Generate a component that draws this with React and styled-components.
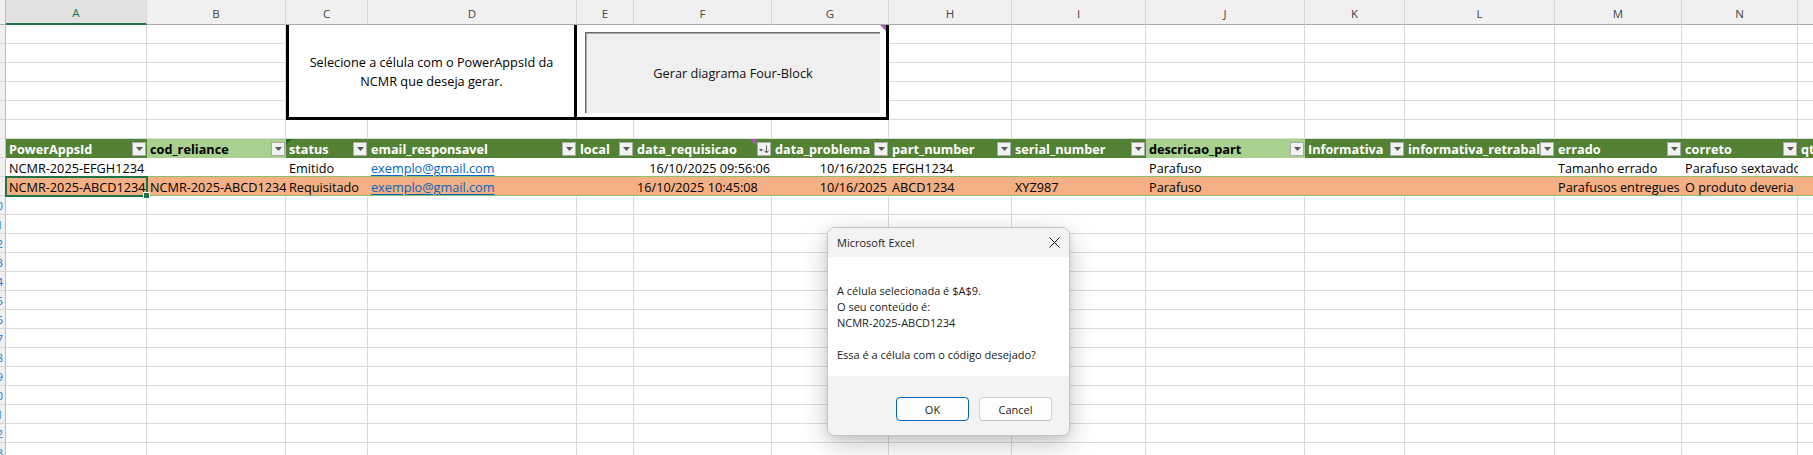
import React from 'react';
import styled, { createGlobalStyle } from 'styled-components';

const COL_WIDTHS = [141, 139, 82, 209, 57, 138, 117, 123, 134, 159, 100, 150, 127, 116, 100];
const LETTERS = ['A', 'B', 'C', 'D', 'E', 'F', 'G', 'H', 'I', 'J', 'K', 'L', 'M', 'N', 'O'];
const ROW_COUNT = 23;
const FONT = `"Open Sans", "Liberation Sans", sans-serif`;

const GlobalStyle = createGlobalStyle`
  html, body { margin: 0; padding: 0; background: #fff; overflow: hidden; }
  body { font-family: ${FONT}; }
`;

const Sheet = styled.div`
  position: relative;
  width: 1813px;
  height: 455px;
  overflow: hidden;
  background: #fff;
`;

const Grid = styled.div`
  display: grid;
  grid-template-columns: 6px ${COL_WIDTHS.map((w) => `${w}px`).join(' ')};
  grid-template-rows: 25px repeat(${ROW_COUNT}, 19px);
`;

const Corner = styled.div`
  grid-row: 1;
  grid-column: 1;
  box-sizing: border-box;
  background: #f0f0f0;
  border-right: 1px solid #bdbdbd;
  border-bottom: 1px solid #ababab;
`;

const ColHead = styled.div`
  grid-row: 1;
  grid-column: ${(p) => p.$col};
  box-sizing: border-box;
  background: ${(p) => (p.$selected ? '#e1e1e1' : '#f0f0f0')};
  border-right: 1px solid #d6d6d6;
  border-bottom: ${(p) => (p.$selected ? '2px solid #217346' : '1px solid #ababab')};
  color: ${(p) => (p.$selected ? '#217346' : '#444')};
  font-family: ${FONT};
  font-size: 11.5px;
  display: flex;
  align-items: center;
  justify-content: center;
  padding-top: 2px;
`;

const RowHead = styled.div`
  grid-row: ${(p) => p.$row};
  grid-column: 1;
  box-sizing: border-box;
  background: #f0f0f0;
  border-right: 1px solid #bdbdbd;
  border-bottom: 1px solid #d6d6d6;
  overflow: hidden;
  white-space: nowrap;
  display: flex;
  justify-content: flex-end;
  padding-right: 2px;
  font-size: 11.5px;
  line-height: 19px;
  color: #2f75d0;
`;

const Cell = styled.div`
  grid-row: ${(p) => p.$row};
  grid-column: ${(p) => p.$col};
  box-sizing: border-box;
  background: #fff;
  border-right: 1px solid #dadada;
  border-bottom: 1px solid #dadada;
  min-width: 0;
`;

const MergedNote = styled.div`
  grid-row: 2 / span 5;
  grid-column: 4 / span 2;
  box-sizing: border-box;
  background: #fff;
  border-left: 3px solid #000;
  border-right: 3px solid #000;
  border-bottom: 3px solid #000;
  display: flex;
  align-items: center;
  justify-content: center;
  text-align: center;
  font-family: ${FONT};
  font-size: 12.7px;
  line-height: 19px;
  color: #000;
  padding-top: 2px;
`;

const MergedAction = styled.div`
  grid-row: 2 / span 5;
  grid-column: 6 / span 3;
  position: relative;
  box-sizing: border-box;
  background: #fff;
  border-right: 3px solid #000;
  border-bottom: 3px solid #000;
  padding: 7px 6px 4px 8px;
  display: flex;

  &::after {
    content: '';
    position: absolute;
    top: 0;
    right: 0;
    width: 0;
    height: 0;
    border-top: 6px solid #b54fc6;
    border-left: 6px solid transparent;
  }
`;

const FormButton = styled.div`
  flex: 1;
  background: #efefef;
  border-top: 1px solid #6b6b6b;
  border-left: 1px solid #6b6b6b;
  box-shadow: inset 1px 1px 0 #a8a8a8;
  display: flex;
  align-items: center;
  justify-content: center;
  font-family: ${FONT};
  font-size: 12.7px;
  color: #111;
`;

const HeadCell = styled.div`
  grid-row: 8;
  grid-column: ${(p) => p.$col};
  position: relative;
  box-sizing: border-box;
  min-width: 0;
  background: ${(p) => (p.$light ? '#a9d08e' : '#548235')};
  color: ${(p) => (p.$light ? '#000' : '#fff')};
  font-family: ${FONT};
  font-weight: 700;
  font-size: 12.7px;
  line-height: 20px;
  padding: 0 3px;
  white-space: nowrap;
  overflow: hidden;
`;

const FilterBtn = styled.span`
  position: absolute;
  right: 1px;
  top: 3px;
  width: 14px;
  height: 14px;
  box-sizing: border-box;
  background: #f2f2f2;
  border: 1px solid #a9a9a9;
  display: flex;
  align-items: center;
  justify-content: center;
`;

const ErrorMark = styled.span`
  position: absolute;
  top: 0;
  left: 0;
  width: 0;
  height: 0;
  border-top: 6px solid #1c6b23;
  border-right: 6px solid transparent;
`;

const NoteMark = styled.span`
  position: absolute;
  top: 0;
  right: 16px;
  width: 0;
  height: 0;
  border-top: 6px solid #b54fc6;
  border-left: 6px solid transparent;
`;

const DataCell = styled.div`
  grid-row: ${(p) => p.$row};
  grid-column: ${(p) => p.$col};
  box-sizing: border-box;
  min-width: 0;
  background: ${(p) => p.$bg};
  border-bottom: 1px solid #8cc06a;
  font-family: ${FONT};
  font-size: 12.7px;
  line-height: 20px;
  color: #000;
  padding: ${(p) => (p.$pr ? `0 ${p.$pr}px 0 3px` : '0 3px')};
  white-space: nowrap;
  overflow: hidden;
  text-align: ${(p) => p.$align || 'left'};
`;

const Link = styled.span`
  color: #0563c1;
  text-decoration: underline;
  text-underline-offset: 2px;
`;

const Selection = styled.div`
  grid-row: 10;
  grid-column: 2;
  position: relative;
  margin: -1px;
  border: 2px solid #217346;
  pointer-events: none;
`;

const FillHandle = styled.span`
  position: absolute;
  right: -4px;
  bottom: -4px;
  width: 5px;
  height: 5px;
  background: #217346;
  border: 1px solid #fff;
`;

const Dialog = styled.div`
  position: absolute;
  left: 827px;
  top: 227px;
  width: 243px;
  height: 209px;
  box-sizing: border-box;
  border: 1px solid #c4c4c4;
  border-radius: 8px;
  background: #fff;
  box-shadow: 0 8px 26px rgba(0, 0, 0, 0.22), 0 2px 6px rgba(0, 0, 0, 0.08);
  display: flex;
  flex-direction: column;
  overflow: hidden;
  font-family: ${FONT};
  font-size: 11px;
  color: #1b1b1b;
`;

const TitleBar = styled.div`
  height: 29px;
  background: #f3f3f3;
  display: flex;
  align-items: center;
  justify-content: space-between;
  padding: 0 9px;
  font-size: 11px;
`;

const CloseIcon = styled.svg`
  width: 11px;
  height: 11px;
`;

const DialogBody = styled.div`
  flex: 1;
  background: #fff;
  padding: 26px 9px 0 9px;
  line-height: 16px;
`;

const BodyLine = styled.div`
  min-height: 16px;
  white-space: nowrap;
`;

const DialogFooter = styled.div`
  height: 59px;
  box-sizing: border-box;
  background: #f3f3f3;
  display: flex;
  justify-content: flex-end;
  align-items: flex-start;
  gap: 10px;
  padding: 21px 17px 0 0;
`;

const DlgButton = styled.div`
  width: 73px;
  height: 24px;
  box-sizing: border-box;
  border-radius: 4px;
  background: #fdfdfd;
  border: 1px solid ${(p) => (p.$primary ? '#0067c0' : '#d1d1d1')};
  border-bottom-color: ${(p) => (p.$primary ? '#0067c0' : '#bcbcbc')};
  display: flex;
  align-items: center;
  justify-content: center;
  font-size: 11px;
  color: #1b1b1b;
`;

const HEADERS = [
  { t: 'PowerAppsId' },
  { t: 'cod_reliance', light: true },
  { t: 'status', err: true },
  { t: 'email_responsavel' },
  { t: 'local' },
  { t: 'data_requisicao', sort: true, note: true },
  { t: 'data_problema' },
  { t: 'part_number' },
  { t: 'serial_number' },
  { t: 'descricao_part', light: true },
  { t: 'Informativa' },
  { t: 'informativa_retraball' },
  { t: 'errado' },
  { t: 'correto' },
  { t: 'qt', nofilter: true },
];

const ROWS = [
  {
    bg: '#ffffff',
    cells: [
      'NCMR-2025-EFGH1234',
      '',
      'Emitido',
      { link: 'exemplo@gmail.com' },
      '',
      { t: '16/10/2025 09:56:06', align: 'right', pr: 2 },
      { t: '10/16/2025', align: 'right', pr: 2 },
      'EFGH1234',
      '',
      'Parafuso',
      '',
      '',
      'Tamanho errado',
      'Parafuso sextavado',
      '',
    ],
  },
  {
    bg: '#f4b084',
    cells: [
      'NCMR-2025-ABCD1234',
      'NCMR-2025-ABCD1234',
      'Requisitado',
      { link: 'exemplo@gmail.com' },
      '',
      '16/10/2025 10:45:08',
      { t: '10/16/2025', align: 'right', pr: 2 },
      'ABCD1234',
      'XYZ987',
      'Parafuso',
      '',
      '',
      'Parafusos entregues',
      'O produto deveria',
      '',
    ],
  },
];

const DropArrow = () => (
  <svg width="7" height="4" viewBox="0 0 7 4">
    <path d="M0 0 H7 L3.5 4 Z" fill="#5a5a5a" />
  </svg>
);

const SortArrow = () => (
  <svg width="10" height="9" viewBox="0 0 10 9">
    <path d="M0 4 H4 L2 6.5 Z" fill="#5a5a5a" />
    <path d="M7.5 0.5 V7.5" stroke="#5a5a5a" strokeWidth="1" />
    <path d="M5.5 5.5 L7.5 8 L9.5 5.5" stroke="#5a5a5a" strokeWidth="1" fill="none" />
  </svg>
);

function isMerged(r, c) {
  if (r >= 1 && r <= 5 && (c === 2 || c === 3)) return true;
  if (r >= 1 && r <= 5 && c >= 4 && c <= 6) return true;
  return false;
}

export default function App() {
  const rowNums = [];
  for (let r = 1; r <= ROW_COUNT; r++) {
    rowNums.push(
      <RowHead key={`rh${r}`} $row={r + 1}>
        <span>{r >= 10 ? r : ''}</span>
      </RowHead>
    );
  }

  const emptyCells = [];
  for (let r = 1; r <= ROW_COUNT; r++) {
    if (r >= 7 && r <= 9) continue;
    for (let c = 0; c < COL_WIDTHS.length; c++) {
      if (isMerged(r, c)) continue;
      emptyCells.push(<Cell key={`c${r}-${c}`} $row={r + 1} $col={c + 2} />);
    }
  }

  return (
    <Sheet>
      <GlobalStyle />
      <Grid>
        <Corner />
        {LETTERS.map((l, i) => (
          <ColHead key={l} $col={i + 2} $selected={i === 0}>
            {l}
          </ColHead>
        ))}
        {rowNums}
        {emptyCells}
        <MergedNote>
          Selecione a célula com o PowerAppsId da
          <br />
          NCMR que deseja gerar.
        </MergedNote>
        <MergedAction>
          <FormButton>Gerar diagrama Four-Block</FormButton>
        </MergedAction>
        {HEADERS.map((h, i) => (
          <HeadCell key={`h${i}`} $col={i + 2} $light={h.light}>
            {h.t}
            {h.err && <ErrorMark />}
            {h.note && <NoteMark />}
            {!h.nofilter && <FilterBtn>{h.sort ? <SortArrow /> : <DropArrow />}</FilterBtn>}
          </HeadCell>
        ))}
        {ROWS.map((row, ri) =>
          row.cells.map((cell, ci) => {
            const obj = typeof cell === 'string' ? { t: cell } : cell;
            return (
              <DataCell
                key={`d${ri}-${ci}`}
                $row={ri + 9}
                $col={ci + 2}
                $bg={row.bg}
                $align={obj.align}
                $pr={obj.pr}
              >
                {obj.link ? <Link>{obj.link}</Link> : obj.t}
              </DataCell>
            );
          })
        )}
        <Selection>
          <FillHandle />
        </Selection>
      </Grid>

      <Dialog>
        <TitleBar>
          <span>Microsoft Excel</span>
          <CloseIcon viewBox="0 0 11 11">
            <path d="M0.5 0.5 L10.5 10.5 M10.5 0.5 L0.5 10.5" stroke="#1b1b1b" strokeWidth="1" />
          </CloseIcon>
        </TitleBar>
        <DialogBody>
          <BodyLine>A célula selecionada é $A$9.</BodyLine>
          <BodyLine>O seu conteúdo é:</BodyLine>
          <BodyLine>NCMR-2025-ABCD1234</BodyLine>
          <BodyLine />
          <BodyLine>Essa é a célula com o código desejado?</BodyLine>
        </DialogBody>
        <DialogFooter>
          <DlgButton $primary>OK</DlgButton>
          <DlgButton>Cancel</DlgButton>
        </DialogFooter>
      </Dialog>
    </Sheet>
  );
}
